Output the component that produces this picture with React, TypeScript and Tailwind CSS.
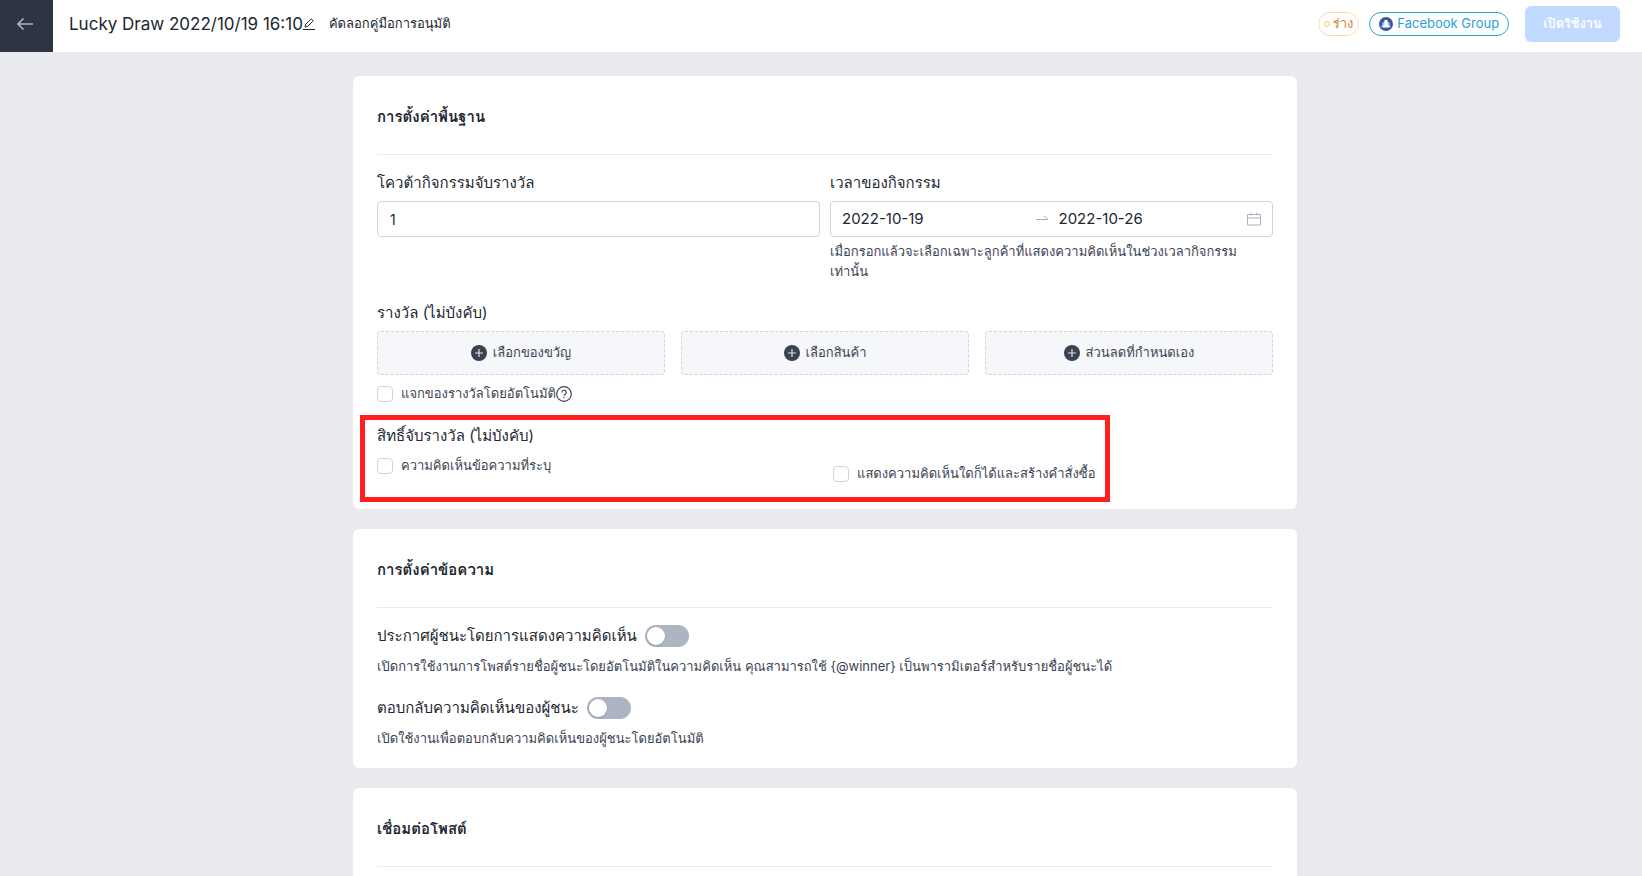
import type { ReactNode } from "react";

function Card({ title, children }: { title: string; children?: ReactNode }) {
  return (
    <section className="rounded-md bg-white px-6">
      <h2 className="flex h-[79px] items-center border-b border-[#e8ebf1] pt-1 text-[15px] leading-6 font-bold text-[#212631]">
        {title}
      </h2>
      {children}
    </section>
  );
}

function Check({ id, label, children }: { id: string; label: string; children?: ReactNode }) {
  return (
    <div className="flex h-6 items-center">
      <input
        id={id}
        type="checkbox"
        className="h-4 w-4 shrink-0 appearance-none rounded-sm border border-[#c8d6e2] bg-white checked:bg-[#1677ff]"
      />
      <label htmlFor={id} className="pl-2 text-[13px] whitespace-nowrap text-[#3c4454]">
        {label}
      </label>
      {children}
    </div>
  );
}

function PrizeButton({ label }: { label: string }) {
  return (
    <button
      type="button"
      className="flex h-11 items-center justify-center gap-1.5 rounded border border-dashed border-[#cfd4e4] bg-[#f6f7fb] text-[13px] text-[#3c4454]"
    >
      <svg className="h-4 w-4" viewBox="0 0 16 16" aria-hidden="true">
        <circle cx="8" cy="8" r="8" fill="#3a4150" />
        <path d="M8 4v8M4 8h8" stroke="#dfe2e8" strokeWidth="1.2" />
      </svg>
      {label}
    </button>
  );
}

function Toggle({ id, label, hint }: { id: string; label: string; hint: string }) {
  return (
    <div>
      <div className="flex h-8 items-center gap-2">
        <label htmlFor={id} className="text-[15px] leading-6 text-[#212631]">
          {label}
        </label>
        <button
          id={id}
          type="button"
          role="switch"
          aria-checked="false"
          className="flex h-[22px] w-11 items-center rounded-full bg-[#adb5c4] px-0.5"
        >
          <span className="h-[18px] w-[18px] rounded-full bg-white shadow-sm" />
        </button>
      </div>
      <p className="pt-0.5 text-[13px] leading-6 text-[#3c4454]">{hint}</p>
    </div>
  );
}

export default function App() {
  return (
    <div className="h-screen overflow-hidden bg-[#e8eaed] font-['Inter','Loma','Waree','Noto_Sans_Thai_Looped','Noto_Sans_Thai',sans-serif] text-[#212631]">
      <header className="flex h-[52px] items-center bg-white pr-[22px]">
        <button
          type="button"
          aria-label="Back"
          className="flex h-full w-[53px] items-center justify-center bg-[#2e3442] pr-1 pb-1"
        >
          <svg className="h-4 w-4" viewBox="0 0 16 16" fill="none" stroke="#aab2c0" strokeWidth="1.6" aria-hidden="true">
            <path d="M16 8H1M6.500 2.500L1 8l5.500 5.500" />
          </svg>
        </button>
        <div className="flex flex-1 items-center pb-1 pl-4">
          <h1 className="text-[17px] leading-6 font-normal">Lucky Draw 2022/10/19 16:10</h1>
          <button type="button" aria-label="Edit name">
            <svg className="h-3 w-3" viewBox="0 0 12 12" fill="none" stroke="#212631" aria-hidden="true">
              <path d="M0 11.500h12" />
              <path d="M2 9l.5-2.500L8.300.8l2 2L4.500 8.500z" strokeLinejoin="round" />
            </svg>
          </button>
          <a href="#manual" className="ml-3.5 text-[13px]">
            คัดลอกคู่มือการอนุมัติ
          </a>
        </div>
        <div className="flex items-center pb-1">
          <span className="flex h-6 items-center gap-[3px] rounded-full border border-[#ffdc9b] px-[5px] text-[13px] text-[#cf8436]">
            <span className="h-1.5 w-1.5 rounded-full border border-[#ffc565]" />
            ร่าง
          </span>
          <span className="ml-2.5 flex h-6 items-center gap-1 rounded-full border border-[#2a9fd8] px-[9px] text-[13px] text-[#2a9fd8]">
            <svg className="h-3.5 w-3.5" viewBox="0 0 14 14" aria-hidden="true">
              <circle cx="7" cy="7" r="7" fill="#3b5998" />
              <path d="M2.200 10.300c0-1.500.6-2 1.600-2.400a1.500 1.500 0 0 1 .7-2.700h5a1.500 1.500 0 0 1 .7 2.700c1 .4 1.600.9 1.600 2.400z" fill="#b9c5de" />
              <ellipse cx="7" cy="5" rx="1.900" ry="2.300" fill="#fff" />
              <path d="M3.800 10.500c0-2.200 1.200-3.500 3.200-3.500s3.200 1.300 3.200 3.500z" fill="#fff" />
            </svg>
            Facebook Group
          </span>
          <button type="button" className="ml-4 h-9 rounded-md bg-[#c2daff] px-[18px] text-[13px] font-semibold text-white">
            เปิดใช้งาน
          </button>
        </div>
      </header>

      <main className="mx-auto flex w-full max-w-[944px] translate-x-1 flex-col gap-5 pt-6">
        <Card title="การตั้งค่าพื้นฐาน">
          <div className="grid grid-cols-2 gap-2.5 pt-4">
            <div>
              <label htmlFor="quota" className="block h-[30px] text-[15px] leading-6">
                โควต้ากิจกรรมจับรางวัล
              </label>
              <input
                id="quota"
                type="text"
                defaultValue="1"
                className="h-9 w-full rounded border border-[#c8d6e2] px-3 text-sm"
              />
            </div>
            <div>
              <label htmlFor="start" className="block h-[30px] text-[15px] leading-6">
                เวลาของกิจกรรม
              </label>
              <div className="flex h-9 items-center rounded border border-[#c8d6e2] px-[11px] text-[15px]">
                <input id="start" type="text" defaultValue="2022-10-19" className="w-0 flex-1" />
                <svg className="mx-2 h-4 w-4 shrink-0" viewBox="0 0 16 16" fill="none" stroke="#a9b2c0" aria-hidden="true">
                  <path d="M1 8.500h12L9 5" />
                </svg>
                <input type="text" aria-label="End date" defaultValue="2022-10-26" className="w-0 flex-1" />
                <svg className="ml-1 h-3.5 w-3.5 shrink-0" viewBox="0 0 14 14" fill="none" stroke="#a9b2c0" aria-hidden="true">
                  <path d="M.5 2.500h13v10.500H.5zM.5 6h13M4 .5v3M10 .5v3" />
                </svg>
              </div>
              <p className="pt-1 pr-4 text-[13px] leading-5 text-[#3c4454]">
                เมื่อกรอกแล้วจะเลือกเฉพาะลูกค้าที่แสดงความคิดเห็นในช่วงเวลากิจกรรมเท่านั้น
              </p>
            </div>
          </div>

          <h3 className="pt-5 pb-1.5 text-[15px] leading-6">รางวัล (ไม่บังคับ)</h3>
          <div className="grid grid-cols-3 gap-4">
            <PrizeButton label="เลือกของขวัญ" />
            <PrizeButton label="เลือกสินค้า" />
            <PrizeButton label="ส่วนลดที่กำหนดเอง" />
          </div>
          <div className="pt-[7px]">
            <Check id="auto" label="แจกของรางวัลโดยอัตโนมัติ">
              <svg className="h-4 w-4" viewBox="0 0 16 16" fill="none" stroke="#3c4454" strokeWidth="1.200" aria-hidden="true">
                <circle cx="8" cy="8" r="7.300" />
                <path d="M5.800 6.500a2.200 2.200 0 1 1 3.200 1.900c-.7.400-1 .7-1 1.400M8 11v1.200" />
              </svg>
            </Check>
          </div>

          <div className="relative mt-[18px] pb-[23px]">
            <div className="pointer-events-none absolute -top-[9px] -left-[17px] h-[87px] w-[750px] border-[5px] border-[#ff1f1f]" />
            <h3 className="pb-1.5 text-[15px] leading-6">สิทธิ์จับรางวัล (ไม่บังคับ)</h3>
            <div className="grid grid-cols-2 gap-2.5">
              <Check id="keyword" label="ความคิดเห็นข้อความที่ระบุ" />
              <div className="pt-2 pl-[3px]">
                <Check id="order" label="แสดงความคิดเห็นใดก็ได้และสร้างคำสั่งซื้อ" />
              </div>
            </div>
          </div>
        </Card>

        <Card title="การตั้งค่าข้อความ">
          <div className="flex flex-col gap-3.5 pt-3 pb-[18px]">
            <Toggle
              id="announce"
              label="ประกาศผู้ชนะโดยการแสดงความคิดเห็น"
              hint="เปิดการใช้งานการโพสต์รายชื่อผู้ชนะโดยอัตโนมัติในความคิดเห็น คุณสามารถใช้ {@winner} เป็นพารามิเตอร์สำหรับรายชื่อผู้ชนะได้"
            />
            <Toggle
              id="reply"
              label="ตอบกลับความคิดเห็นของผู้ชนะ"
              hint="เปิดใช้งานเพื่อตอบกลับความคิดเห็นของผู้ชนะโดยอัตโนมัติ"
            />
          </div>
        </Card>

        <Card title="เชื่อมต่อโพสต์">
          <div className="h-20" />
        </Card>
      </main>
    </div>
  );
}
